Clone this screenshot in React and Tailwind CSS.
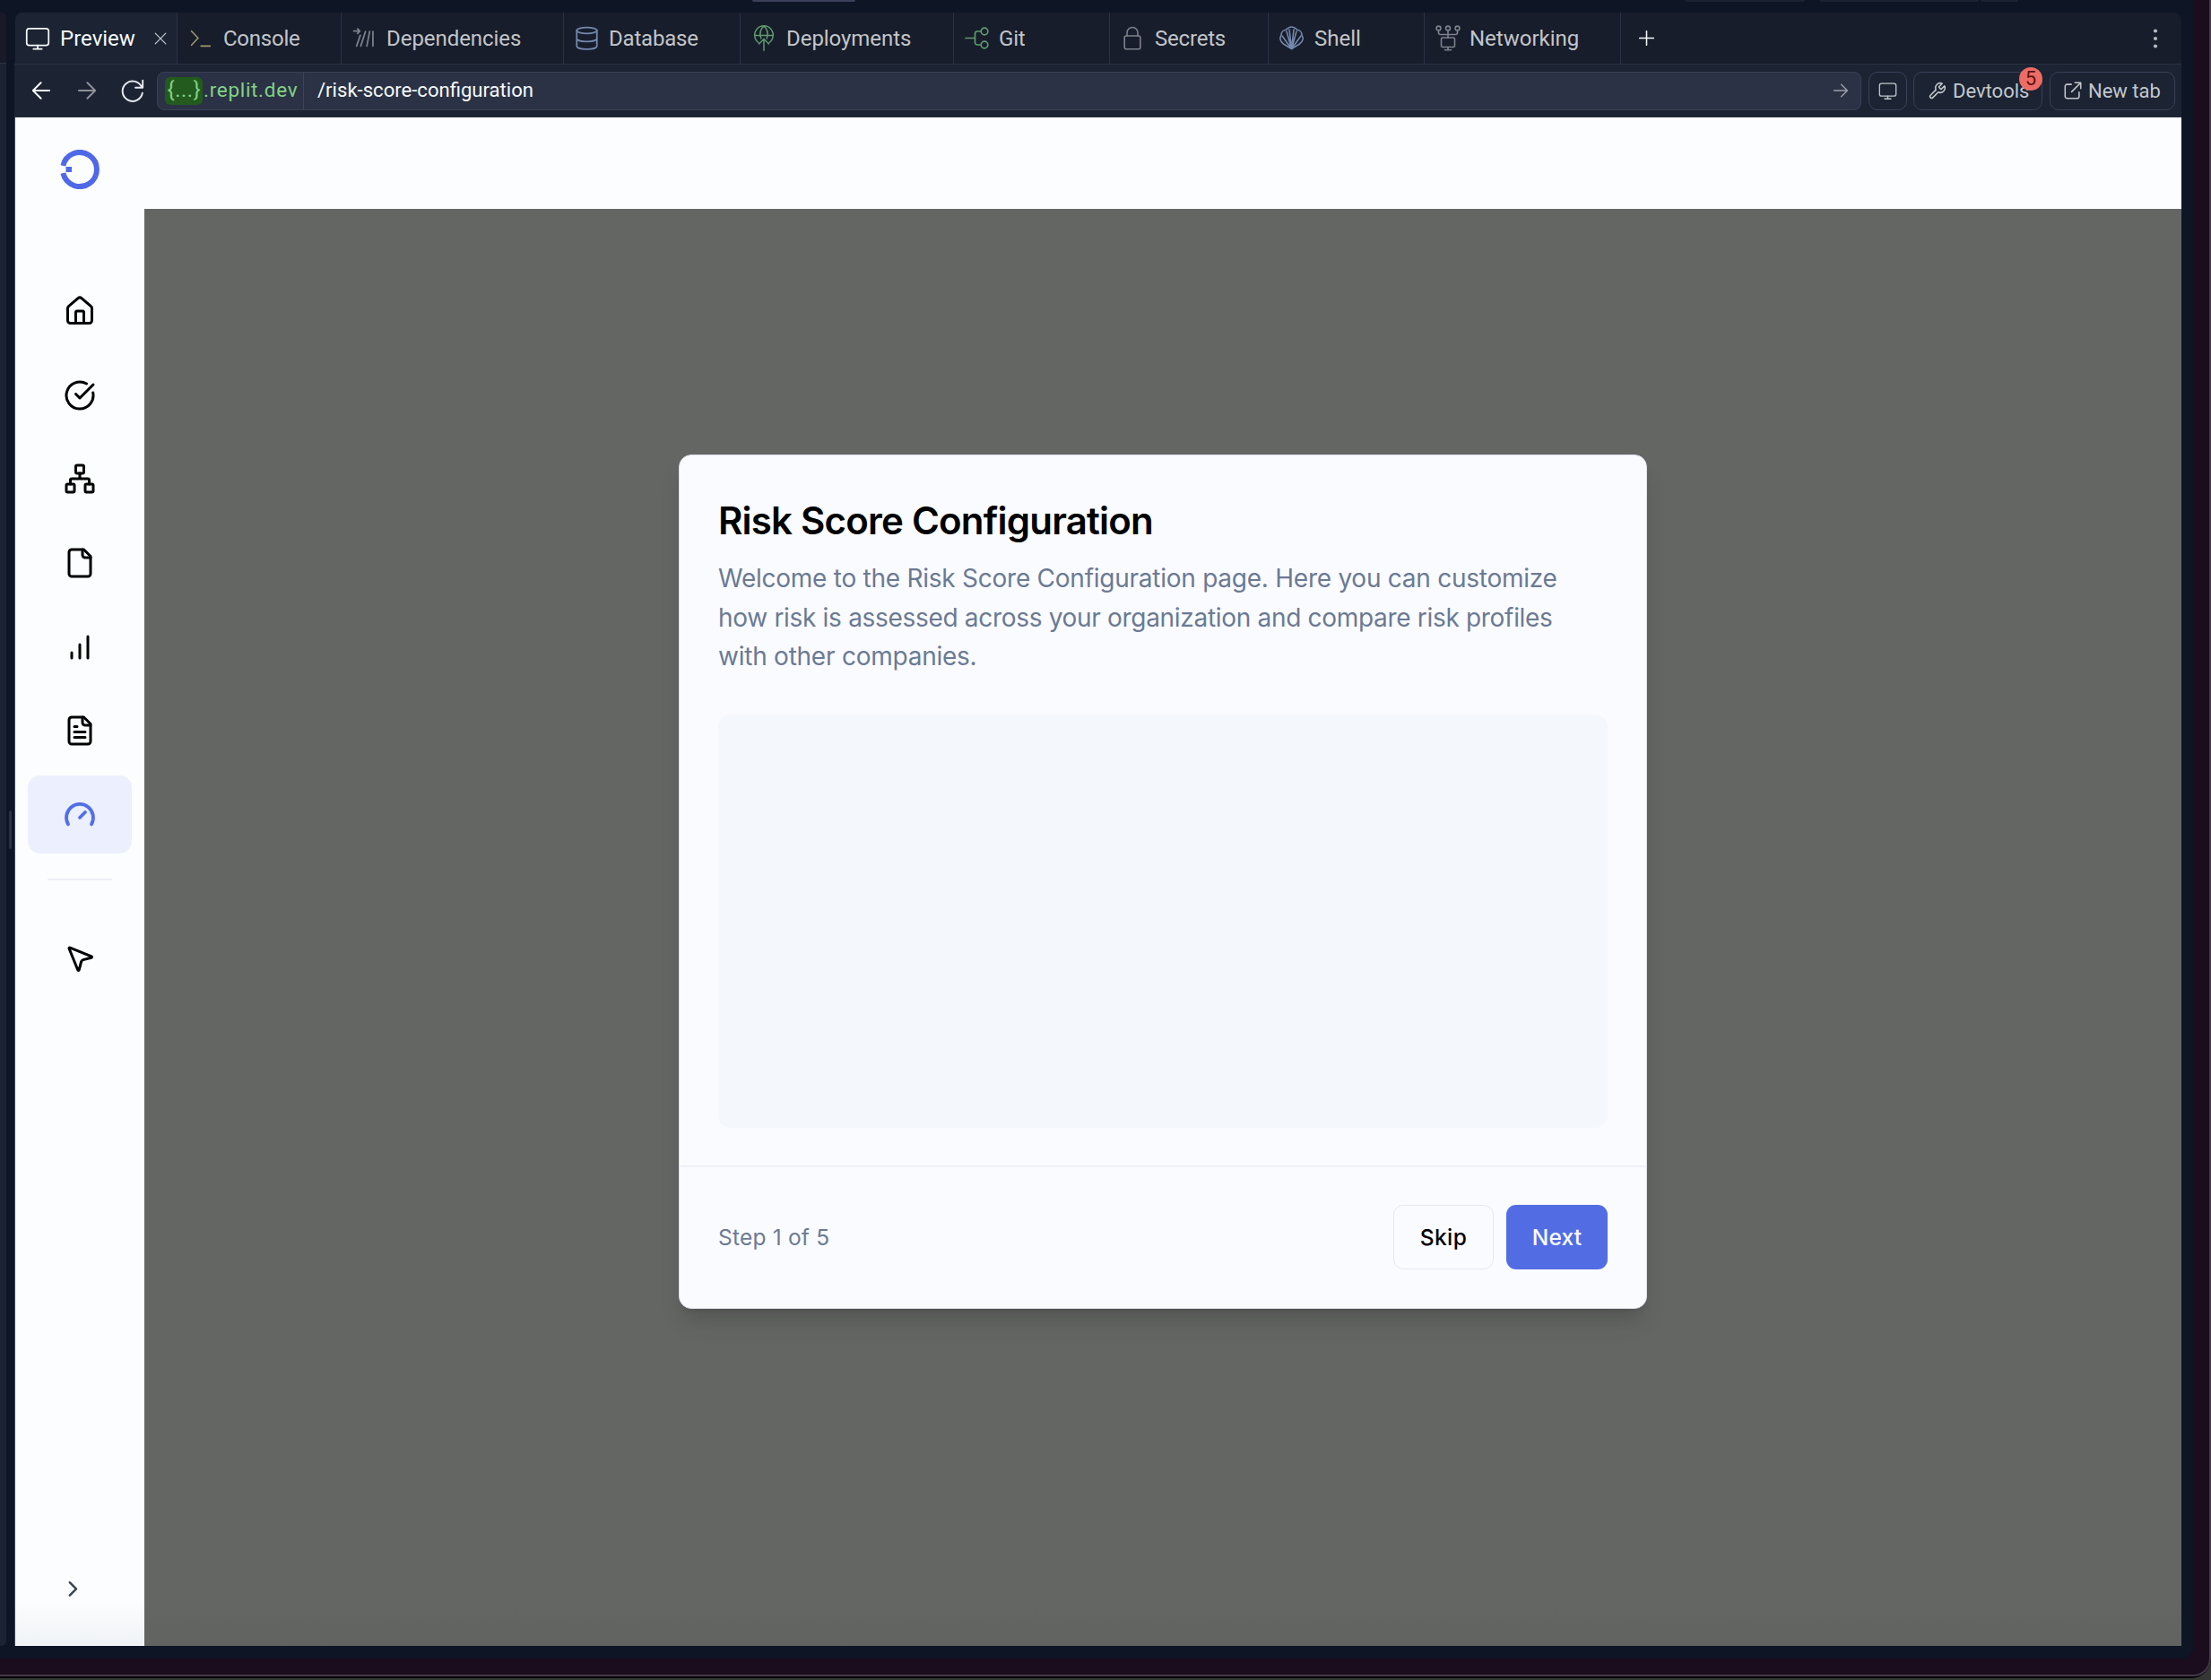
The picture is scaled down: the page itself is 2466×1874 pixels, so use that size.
const line = { fill: "none", stroke: "currentColor", strokeLinecap: "round", strokeLinejoin: "round" };

function Icon({ className, stroke = 2, box = "0 0 24 24", children }) {
  return (
    <svg viewBox={box} className={className} {...line} strokeWidth={stroke}>
      {children}
    </svg>
  );
}

const Monitor = ({ className }) => (
  <Icon className={className} stroke={1.5}>
    <rect x="1.5" y="2.5" width="21" height="16" rx="2.5" />
    <path d="M12 18.5v3M8 22h8" />
  </Icon>
);

const Prompt = () => (
  <Icon className="size-[25px] text-[#a3976a]" stroke={1.5}>
    <path d="m3.5 4.500 7 7.500-7 7.500M13.500 20.500h10" />
  </Icon>
);

const Packages = () => (
  <Icon className="size-[25px] text-[#7d818a]" stroke={1.7}>
    <path d="M1.500 4.500h6.500M5.500 2l2.500 2.500-2.500 2.500M8.500 9 4.500 20.500M14 5 9 20.500M18.500 5 15.500 20.500M22 5v15.500" />
  </Icon>
);

const Database = () => (
  <Icon className="size-[27px] text-[#7488ac]" stroke={1.6}>
    <ellipse cx="12" cy="4.500" rx="10" ry="3" />
    <path d="M2 4.500V20c0 1.700 4.500 3 10 3s10-1.300 10-3V4.500M2 12.500c0 1.700 4.500 3 10 3s10-1.300 10-3" />
  </Icon>
);

const Deploy = () => (
  <Icon className="h-[29px] w-[24px] text-[#5f9a6c]" stroke={1.5} box="0 0 24 29">
    <path d="M6 19.500A10.300 10.300 0 1 1 18 19.500M1.800 11.500h20.400M8.800 15C6.800 9 8.500 4 12 1.200 15.500 4 17.200 9 15.200 15" />
    <path d="M12 28.200V15.500M6.500 21l5.500-5.500 5.500 5.500" />
  </Icon>
);

const Git = () => (
  <Icon className="size-[27px] text-[#5f9a6c]" stroke={1.7} box="0 0 27 27">
    <circle cx="22" cy="6" r="3.800" />
    <circle cx="22" cy="21" r="3.800" />
    <path d="M1 13.500h10.500M18 6h-4a2.500 2.500 0 0 0-2.500 2.500v10A2.500 2.500 0 0 0 14 21h4" />
  </Icon>
);

const Lock = () => (
  <Icon className="h-[27px] w-[20px] text-[#7d818a]" stroke={1.6} box="0 0 20 27">
    <rect x="1.200" y="11" width="17.600" height="14.800" rx="2" />
    <path d="M4 11V7.500a6 6 0 0 1 12 0V11" />
  </Icon>
);

const Shell = () => (
  <Icon className="size-[27px] text-[#7488ac]" stroke={1.6} box="0 0 27 27">
    <path d="M13.500 25.500 4.500 20C.5 17 0 13 2 10.500c0-4 2.500-6 5-6C9 2.500 11 1 13.500 1s4.500 1.500 6.500 3.500c2.500 0 5 2 5 6 2 2.500 1.500 6.500-2.500 9.500z" />
    <path d="M13.500 25.500 3 11M13.500 25.500 8 6M13.500 25.500 11 4M13.500 25.500 16 4M13.500 25.500 19 6M13.500 25.500 24 11" />
  </Icon>
);

const Networking = () => (
  <Icon className="h-[29px] w-[28px] text-[#7d818a]" stroke={1.6} box="0 0 28 29">
    <circle cx="3.500" cy="3.500" r="2.400" />
    <circle cx="14" cy="3.500" r="2.400" />
    <circle cx="24.500" cy="3.500" r="2.400" />
    <path d="M3.500 6v2.500a2 2 0 0 0 2 2h17a2 2 0 0 0 2-2V6M14 6v8M14 24.500v3M10.500 27.800h7" />
    <rect x="6.500" y="14" width="15" height="10.500" rx="1.500" />
  </Icon>
);

const TABS = [
  { label: "Console", icon: <Prompt />, width: "w-[183px]", pad: "pl-[12px]", gap: "gap-[14px]", track: "tracking-[-0.250px]" },
  { label: "Dependencies", icon: <Packages />, width: "w-[248px]", pad: "pl-[12px]", gap: "gap-[13px]", track: "tracking-[-0.050px]" },
  { label: "Database", icon: <Database />, width: "w-[197px]", pad: "pl-[12px]", gap: "gap-[11px]", track: "tracking-[-0.200px]" },
  { label: "Deployments", icon: <Deploy />, width: "w-[238px]", pad: "pl-[14px]", gap: "gap-[13px]", track: "tracking-[-0.050px]" },
  { label: "Git", icon: <Git />, width: "w-[174px]", pad: "pl-[12px]", gap: "gap-[11px]", track: "tracking-[-0.200px]" },
  { label: "Secrets", icon: <Lock />, width: "w-[177px]", pad: "pl-[15px]", gap: "gap-[15px]", track: "tracking-[-0.200px]" },
  { label: "Shell", icon: <Shell />, width: "w-[174px]", pad: "pl-[12px]", gap: "gap-[12px]", track: "tracking-normal" },
  { label: "Networking", icon: <Networking />, width: "w-[219px]", pad: "pl-[12px]", gap: "gap-[10px]", track: "tracking-normal" },
];

function TabBar() {
  return (
    <div className="flex h-[57px] rounded-t-lg bg-[#171d2b] text-2xl text-[#c2c5c9]">
      <div className="flex w-[181px] items-center rounded-tl-lg border-r border-[#2b3245] bg-[#1c2333] pl-[11px] text-[#f5f9fc]">
        <Monitor className="size-[28px]" />
        <span className="ml-[11px] w-[104px]">Preview</span>
        <Icon className="ml-[1px] size-[14px] text-[#c2c8cc]" stroke={2.200}>
          <path d="m2 2 20 20M22 2 2 22" />
        </Icon>
      </div>
      {TABS.map((t) => (
        <div key={t.label} className={`flex items-center border-r border-[#2b3245] ${t.width} ${t.pad} ${t.gap}`}>
          {t.icon}
          <span className={t.track}>{t.label}</span>
        </div>
      ))}
      <Icon className="mt-[20px] ml-[20px] size-[17px] text-[#f5f9fc]" stroke={2.200}>
        <path d="M12 1v22M1 12h22" />
      </Icon>
      <svg viewBox="0 0 6 22" className="mt-[18px] mr-[26px] ml-auto h-[22px] w-[6px] fill-[#b4b8bf]">
        <circle cx="3" cy="2.500" r="2.100" />
        <circle cx="3" cy="11" r="2.100" />
        <circle cx="3" cy="19.500" r="2.100" />
      </svg>
    </div>
  );
}

function AddressBar() {
  return (
    <div className="flex h-[60px] items-center border-y border-[#2b3245] bg-[#1c2333] pr-[7px] text-[22px] text-[#c2c8cc]">
      <Icon className="ml-[20px] size-[20px] text-[#f5f9fc]" stroke={2.300}>
        <path d="M23 12H1M11.500 1.500 1 12l10.500 10.500" />
      </Icon>
      <Icon className="ml-[31px] size-[20px] text-[#8f9299]" stroke={2.300}>
        <path d="M1 12h22M12.500 1.500 23 12 12.500 22.500" />
      </Icon>
      <Icon className="ml-[28px] size-[26px] text-[#e6eaee]" stroke={1.800}>
        <path d="M22.300 1.500v7.500h-7.500M21.500 9A10.300 10.300 0 1 0 22 14.500" />
      </Icon>
      <div className="ml-[14px] flex h-[43px] w-[1901px] items-center rounded-lg border border-[#3a4055] bg-[#2b3245]">
        <div className="flex h-full w-[163px] items-center border-r border-[#3c445c] pl-[8px] text-[22.500px] tracking-[0.700px] text-[#82d384]">
          <span className="flex h-[31px] w-[42px] items-center justify-center rounded-md bg-[#235a1e] pl-px text-[23px] tracking-[0.700px]">{"{...}"}</span>
          <span className="ml-px">.replit.dev</span>
        </div>
        <span className="ml-[15px] text-[22.100px] text-[#f5f9fc]">/risk-score-configuration</span>
        <Icon className="mr-[14px] ml-auto size-[16px] text-[#9a9ea6]" stroke={2.200}>
          <path d="M1 12h22M13 2l10 10-10 10" />
        </Icon>
      </div>
      <div className="ml-[8px] flex h-[43px] w-[43px] shrink-0 items-center justify-center rounded-[10px] border border-[#3a4158]">
        <Monitor className="size-[21px]" />
      </div>
      <div className="relative ml-[7px] flex h-[43px] w-[144px] shrink-0 items-center rounded-[10px] border border-[#3a4158] pl-[15px]">
        <Icon className="size-[21px]" stroke={1.800}>
          <path d="M14.700 6.300a1 1 0 0 0 0 1.400l1.600 1.600a1 1 0 0 0 1.400 0l3.770-3.770a6 6 0 0 1-7.940 7.940l-6.910 6.910a2.120 2.120 0 0 1-3-3l6.910-6.910a6 6 0 0 1 7.940-7.940l-3.760 3.760z" />
        </Icon>
        <span className="ml-[7px]">Devtools</span>
        <span className="absolute -top-[6px] -right-px flex size-[26px] items-center justify-center rounded-full bg-[#ee6c66] text-[22px] text-[#5c1410]">5</span>
      </div>
      <div className="ml-auto flex h-[43px] w-[140px] shrink-0 items-center rounded-[10px] border border-[#3a4158] pl-[14px]">
        <Icon className="size-[22px]" stroke={1.700}>
          <path d="M10 4.500H5a2.500 2.500 0 0 0-2.500 2.500v12A2.500 2.500 0 0 0 5 21.500h12a2.500 2.500 0 0 0 2.500-2.500v-5M14.500 2.500h7v7M21.500 2.500l-11 11" />
        </Icon>
        <span className="ml-[6px]">New tab</span>
      </div>
    </div>
  );
}

const page = <path d="M15 2H6a2 2 0 0 0-2 2v16a2 2 0 0 0 2 2h12a2 2 0 0 0 2-2V7Z" />;
const fold = <path d="M14 2v4a2 2 0 0 0 2 2h4" />;

const NAV = [
  {
    id: "home",
    icon: (
      <>
        <path d="M15 21v-8a1 1 0 0 0-1-1h-4a1 1 0 0 0-1 1v8" />
        <path d="M3 10a2 2 0 0 1 .709-1.528l7-6a2 2 0 0 1 2.582 0l7 6A2 2 0 0 1 21 10v9a2 2 0 0 1-2 2H5a2 2 0 0 1-2-2z" />
      </>
    ),
  },
  {
    id: "tasks",
    icon: (
      <>
        <path d="M21.801 10A10 10 0 1 1 17 3.335" />
        <path d="m9 11 3 3L22 4" />
      </>
    ),
  },
  {
    id: "organization",
    icon: (
      <>
        <rect x="16" y="16" width="6" height="6" rx="1" />
        <rect x="2" y="16" width="6" height="6" rx="1" />
        <rect x="9" y="2" width="6" height="6" rx="1" />
        <path d="M5 16v-3a1 1 0 0 1 1-1h12a1 1 0 0 1 1 1v3M12 12V8" />
      </>
    ),
  },
  { id: "files", icon: <>{page}{fold}</> },
  { id: "insights", icon: <path d="M12 20V10M18 20V4M6 20v-4" /> },
  { id: "reports", icon: <>{page}{fold}<path d="M10 9H8M16 13H8M16 17H8" /></> },
  { id: "risk", active: true, icon: <path d="m12 14 4-4M3.340 19a10 10 0 1 1 17.320 0" /> },
];

function Sidebar() {
  return (
    <aside className="flex w-[144px] shrink-0 flex-col items-center bg-linear-to-b from-[#fcfdff] from-97% to-[#f0f3f6]">
      <svg viewBox="0 0 44 44" className="mt-[36px] size-[44px]">
        <path d="M3.400 17.800A19 19 0 1 1 3.400 26.200" fill="none" stroke="#4f68e8" strokeWidth="6" />
        <rect x="6.500" y="19" width="6.500" height="6" fill="#4f68e8" />
      </svg>
      <nav className="mt-[93px] flex flex-col gap-[7.200px]">
        {NAV.map((n) => (
          <div
            key={n.id}
            className={`flex h-[86.400px] w-[116px] items-center justify-center rounded-[14px] ${n.active ? "bg-[#ebeffe] text-[#526fe6]" : "text-black"}`}
          >
            <Icon className="size-[36px]" stroke={n.active ? 2.500 : 2}>{n.icon}</Icon>
          </div>
        ))}
      </nav>
      <div className="mt-[28px] h-[2px] w-[72px] bg-[#eeeff6]" />
      <Icon className="mt-[69px] size-[36px] text-black">
        <path d="M4.037 4.688a.495.495 0 0 1 .651-.651l16 6.500a.5.5 0 0 1-.063.947l-6.124 1.580a2 2 0 0 0-1.438 1.435l-1.579 6.126a.5.5 0 0 1-.947.063z" />
      </Icon>
      <Icon className="mt-auto mr-[15px] mb-[49px] size-[28.800px] text-[#374151]">
        <path d="m9 18 6-6-6-6" />
      </Icon>
    </aside>
  );
}

function Dialog() {
  return (
    <section className="mt-[274px] flex h-[953px] w-[1080px] flex-col overflow-hidden rounded-[14px] border border-[#dfe1ea] bg-[#fafbff] shadow-[0_18px_27px_-5px_rgba(0,0,0,0.14),0_7px_11px_-7px_rgba(0,0,0,0.14)]">
      <div className="flex h-[792px] flex-col px-[43px] pt-[43px]">
        <h1 className="text-[42px] leading-[60px] font-semibold tracking-[-0.780px] text-black">Risk Score Configuration</h1>
        <p className="mt-[13px] flex flex-col text-[28px] leading-[43.500px] whitespace-nowrap text-[#6b7a94]">
          <span className="tracking-[-0.250px]">Welcome to the Risk Score Configuration page. Here you can customize</span>
          <span className="tracking-[-0.310px]">how risk is assessed across your organization and compare risk profiles</span>
          <span className="tracking-[-0.240px]">with other companies.</span>
        </p>
        <div className="mt-[42px] h-[461px] rounded-[14px] bg-[#f4f7fc]" />
      </div>
      <footer className="flex flex-1 items-center border-t-2 border-[#eef0f8] px-[43px] pb-px text-[24.500px]">
        <span className="tracking-[0.200px] text-[#6b7a94]">Step 1 of 5</span>
        <button className="ml-auto h-[72px] w-[112px] rounded-[11px] border border-[#e8e9f0] font-medium tracking-[0.400px] text-black">Skip</button>
        <button className="ml-[14px] h-[72px] w-[113px] rounded-[11px] bg-[#526de4] font-medium tracking-[0.200px] text-[#f8fafc]">Next</button>
      </footer>
    </section>
  );
}

export default function App() {
  return (
    <div className="h-[1874px] w-[2466px] overflow-hidden bg-[#353734]">
      <div className="h-[1872px] overflow-hidden rounded-br-[22px] bg-black">
        <div className="h-[1870px] rounded-br-[20px] border-r-2 border-b-2 border-[#46394a] bg-[#1b0d1e]">
          <div className="flex h-[1850px] w-[2446px] flex-col overflow-hidden rounded-br-[12px] bg-[#0e1525] font-['Roboto',sans-serif]">
            <div className="flex h-[14px] items-start">
              <div className="ml-[839px] h-[2px] w-[115px] rounded-b bg-[#3c4159]" />
              <div className="ml-[925px] h-[2px] w-[134px] rounded-b bg-[#1c2333]" />
              <div className="ml-[16px] h-[2px] w-[178px] rounded-b bg-[#1c2333]" />
              <div className="ml-[2px] h-[2px] w-[42px] rounded-b bg-[#1c2333]" />
            </div>
            <div className="flex h-[1822px]">
              <div className="w-[6.500px] overflow-hidden rounded-r-md bg-[#1c2333]">
                <div className="h-[57px] border-b border-[#2b3245] bg-[#191927]" />
              </div>
              <div className="mt-[890px] ml-[3.500px] h-[43px] w-[3px] rounded-full bg-[#2b3245]" />
              <div className="ml-[3px] flex w-[2417px] flex-col">
                <div className="pl-px">
                  <TabBar />
                </div>
                <AddressBar />
                <div className="flex flex-1 border-l border-[#3c445c] font-['Inter',sans-serif]">
                  <Sidebar />
                  <main className="flex flex-1 flex-col">
                    <div className="h-[102px] bg-[#fcfdff]" />
                    <div className="flex flex-1 flex-col items-center bg-linear-to-b from-[#646664] from-97% to-[#616361]">
                      <Dialog />
                    </div>
                  </main>
                </div>
              </div>
            </div>
          </div>
        </div>
      </div>
    </div>
  );
}
